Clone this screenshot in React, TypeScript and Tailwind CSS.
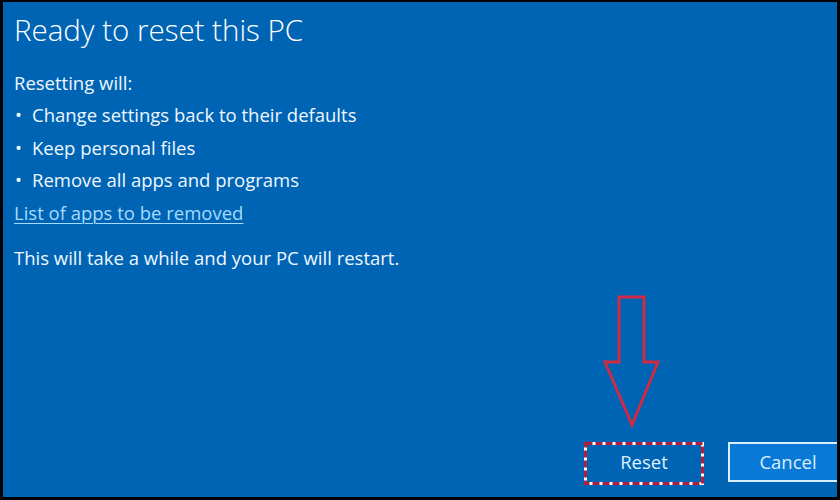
import React from 'react';

// Windows 10 "Ready to reset this PC" dialog, with the red annotation on top

const items = [
  'Change settings back to their defaults',
  'Keep personal files',
  'Remove all apps and programs',
];

function Annotation() {
  return (
    <svg
      className="absolute inset-0 pointer-events-none"
      width="840"
      height="500"
      viewBox="0 0 840 500"
    >
      {/* big outlined arrow pointing at Reset */}
      <path
        d="M619 297 L644 297 L644 362 L658 362 L632 425 L605 362 L619 362 Z"
        fill="none"
        stroke="#d02a44"
        strokeWidth="3"
        strokeLinejoin="miter"
      />
      {/* dashed frame round the Reset button */}
      <rect x="585.5" y="443.5" width="117" height="40" fill="none" stroke="#ffffff" strokeWidth="3" />
      <rect
        x="585.5"
        y="443.5"
        width="117"
        height="40"
        fill="none"
        stroke="#b0203e"
        strokeWidth="3"
        strokeDasharray="7 3"
      />
    </svg>
  );
}

export default function App() {
  return (
    <div className="relative w-[840px] h-[500px] bg-black pt-[2px] pl-[3px] pr-[3px] pb-[3px] font-['Open_Sans',sans-serif]">
      <div className="flex flex-col h-full bg-[#0064b4] overflow-hidden text-white pl-[11px] pb-[15px]">
        <h1 className="text-[29.5px] font-light leading-none mt-[13px]">Ready to reset this PC</h1>

        <div className="mt-[22px] text-[18.5px] leading-[32.5px] text-[#eef7ff]">
          <p>Resetting will:</p>
          <ul>
            {items.map((t) => (
              <li key={t} className="flex">
                <span className="w-[18px] pl-[1px]">•</span>
                <span>{t}</span>
              </li>
            ))}
          </ul>
          <a className="text-[#a6dbff] underline underline-offset-[3px] decoration-1">List of apps to be removed</a>
          <p className="mt-[13px]">This will take a while and your PC will restart.</p>
        </div>

        <div className="mt-auto flex justify-end gap-[24px] -mr-[11px] text-[18.5px]">
          <button className="w-[120px] h-[40px] bg-[#0064b4] text-[#dff1ff]">Reset</button>
          <button className="w-[120px] h-[40px] bg-[#0a79d6] border-2 border-[#d6eeff] text-[#d6eeff]">Cancel</button>
        </div>
      </div>
      <Annotation />
    </div>
  );
}
